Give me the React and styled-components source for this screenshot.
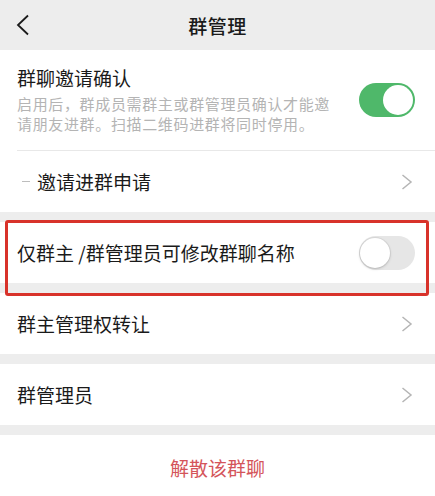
import React from "react";
import styled, { createGlobalStyle } from "styled-components";

const Global = createGlobalStyle`
  html, body { margin: 0; padding: 0; background: #ededed; }
  body { font-family: "Noto Sans CJK SC", "Noto Sans", sans-serif; }
`;

const Page = styled.div`
  width: 435px;
  min-height: 496px;
  background: #ededed;
  overflow: hidden;
`;

const Header = styled.header`
  height: 50px;
  display: grid;
  grid-template-columns: 1fr auto 1fr;
  align-items: center;
  background: #ededed;
`;

const BackBtn = styled.div`
  display: flex;
  align-items: center;
  padding-left: 16px;
`;

const Title = styled.h1`
  margin: 0;
  font-size: 19px;
  font-weight: 500;
  color: #1a1a1a;
  letter-spacing: 0.5px;
`;

const Section = styled.section`
  background: #fff;
  margin-top: ${(p) => p.$gap}px;
  position: relative;
`;

const ToggleItem = styled.div`
  display: flex;
  align-items: center;
  justify-content: space-between;
  padding: 15px 20px 16px 17px;
`;

const TextCol = styled.div`
  flex: 1;
`;

const ItemTitle = styled.div`
  font-size: 19px;
  line-height: 26px;
  color: #1a1a1a;
`;

const Desc = styled.div`
  margin-top: 3px;
  font-size: 15px;
  line-height: 20px;
  letter-spacing: 0.65px;
  color: #b4b4b4;
  white-space: nowrap;
`;

const Divider = styled.div`
  height: 1px;
  background: #e8e8e8;
  margin-left: 17px;
`;

const Row = styled.div`
  height: ${(p) => p.$h || 61}px;
  display: flex;
  align-items: center;
  justify-content: space-between;
  padding: 0 ${(p) => p.$pr || 22}px 0 17px;
  box-sizing: border-box;
`;

const Label = styled.span`
  display: flex;
  align-items: center;
  font-size: 19px;
  color: #1a1a1a;
`;

const Dash = styled.span`
  display: inline-block;
  width: 8px;
  height: 1px;
  background: #bdbdbd;
  margin: 0 7px 0 5px;
`;

const Track = styled.div`
  width: 56px;
  height: 34px;
  border-radius: 17px;
  box-sizing: border-box;
  background: ${(p) => (p.$on ? "#4fb86a" : "#e6e6e6")};
  position: relative;
  flex-shrink: 0;
`;

const Knob = styled.div`
  position: absolute;
  top: 2px;
  ${(p) => (p.$on ? "right: 2px;" : "left: 1px;")}
  width: 30px;
  height: 30px;
  border-radius: 50%;
  background: #fff;
  box-shadow: ${(p) => (p.$on ? "none" : "0 1px 3px rgba(0,0,0,0.18), 0 0 0 1px rgba(0,0,0,0.05)")};
`;

const Highlight = styled.div`
  position: absolute;
  left: 5px;
  right: 6px;
  top: -2px;
  bottom: -13px;
  border: 3px solid #d8322a;
  border-radius: 3px;
  pointer-events: none;
  z-index: 2;
`;

const DangerBtn = styled.div`
  height: 64px;
  display: flex;
  align-items: center;
  justify-content: center;
  font-size: 19px;
  color: #d4555a;
`;

const Toggle = ({ on }) => (
  <Track $on={on}>
    <Knob $on={on} />
  </Track>
);

const Chevron = () => (
  <svg width="12" height="16" viewBox="0 0 12 16">
    <polyline points="1.5,1 10,8 1.5,15" fill="none" stroke="#b5b5b5" strokeWidth="1.5" />
  </svg>
);

export default function App() {
  return (
    <>
      <Global />
      <Page>
        <Header>
          <BackBtn>
            <svg width="14" height="22" viewBox="0 0 14 22">
              <polyline points="12,1.5 2,11 12,20.5" fill="none" stroke="#1a1a1a" strokeWidth="1.8" />
            </svg>
          </BackBtn>
          <Title>群管理</Title>
          <div />
        </Header>

        <Section $gap={0}>
          <ToggleItem>
            <TextCol>
              <ItemTitle>群聊邀请确认</ItemTitle>
              <Desc>
                启用后，群成员需群主或群管理员确认才能邀
                <br />
                请朋友进群。扫描二维码进群将同时停用。
              </Desc>
            </TextCol>
            <Toggle on />
          </ToggleItem>
          <Divider />
          <Row>
            <Label>
              <Dash />
              邀请进群申请
            </Label>
            <Chevron />
          </Row>
        </Section>

        <Section $gap={10}>
          <Row $pr={20}>
            <Label>仅群主 /群管理员可修改群聊名称</Label>
            <Toggle on={false} />
          </Row>
          <Highlight />
        </Section>

        <Section $gap={10}>
          <Row>
            <Label>群主管理权转让</Label>
            <Chevron />
          </Row>
        </Section>

        <Section $gap={10}>
          <Row>
            <Label>群管理员</Label>
            <Chevron />
          </Row>
        </Section>

        <Section $gap={10}>
          <DangerBtn>解散该群聊</DangerBtn>
        </Section>
      </Page>
    </>
  );
}
